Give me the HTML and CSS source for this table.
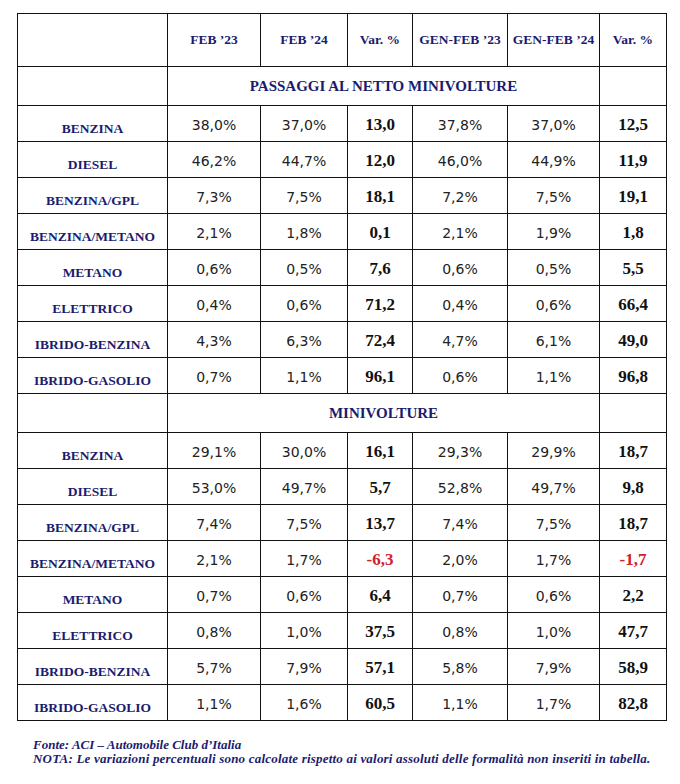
FILE: index.html
```html
<!DOCTYPE html>
<html lang="it">
<head>
<meta charset="utf-8">
<link rel="stylesheet" href="styles.css">
</head>
<body>
<table class="tbl">
  <colgroup>
    <col class="c-lab"><col class="c1"><col class="c2"><col class="c3"><col class="c4"><col class="c5"><col class="c6">
  </colgroup>
  <tr class="head">
    <th></th><th>FEB ’23</th><th>FEB ’24</th><th>Var. %</th><th>GEN-FEB ’23</th><th>GEN-FEB ’24</th><th>Var. %</th>
  </tr>
  <tr class="sec">
    <td></td><td colspan="5">PASSAGGI AL NETTO MINIVOLTURE</td><td></td>
  </tr>
  <tr><td class="lab">BENZINA</td><td>38,0%</td><td>37,0%</td><td class="var">13,0</td><td>37,8%</td><td>37,0%</td><td class="var">12,5</td></tr>
  <tr><td class="lab">DIESEL</td><td>46,2%</td><td>44,7%</td><td class="var">12,0</td><td>46,0%</td><td>44,9%</td><td class="var">11,9</td></tr>
  <tr><td class="lab">BENZINA/GPL</td><td>7,3%</td><td>7,5%</td><td class="var">18,1</td><td>7,2%</td><td>7,5%</td><td class="var">19,1</td></tr>
  <tr><td class="lab">BENZINA/METANO</td><td>2,1%</td><td>1,8%</td><td class="var">0,1</td><td>2,1%</td><td>1,9%</td><td class="var">1,8</td></tr>
  <tr><td class="lab">METANO</td><td>0,6%</td><td>0,5%</td><td class="var">7,6</td><td>0,6%</td><td>0,5%</td><td class="var">5,5</td></tr>
  <tr><td class="lab">ELETTRICO</td><td>0,4%</td><td>0,6%</td><td class="var">71,2</td><td>0,4%</td><td>0,6%</td><td class="var">66,4</td></tr>
  <tr><td class="lab">IBRIDO-BENZINA</td><td>4,3%</td><td>6,3%</td><td class="var">72,4</td><td>4,7%</td><td>6,1%</td><td class="var">49,0</td></tr>
  <tr><td class="lab">IBRIDO-GASOLIO</td><td>0,7%</td><td>1,1%</td><td class="var">96,1</td><td>0,6%</td><td>1,1%</td><td class="var">96,8</td></tr>
  <tr class="sec">
    <td></td><td colspan="5">MINIVOLTURE</td><td></td>
  </tr>
  <tr><td class="lab">BENZINA</td><td>29,1%</td><td>30,0%</td><td class="var">16,1</td><td>29,3%</td><td>29,9%</td><td class="var">18,7</td></tr>
  <tr><td class="lab">DIESEL</td><td>53,0%</td><td>49,7%</td><td class="var">5,7</td><td>52,8%</td><td>49,7%</td><td class="var">9,8</td></tr>
  <tr><td class="lab">BENZINA/GPL</td><td>7,4%</td><td>7,5%</td><td class="var">13,7</td><td>7,4%</td><td>7,5%</td><td class="var">18,7</td></tr>
  <tr><td class="lab">BENZINA/METANO</td><td>2,1%</td><td>1,7%</td><td class="var neg">-6,3</td><td>2,0%</td><td>1,7%</td><td class="var neg">-1,7</td></tr>
  <tr><td class="lab">METANO</td><td>0,7%</td><td>0,6%</td><td class="var">6,4</td><td>0,7%</td><td>0,6%</td><td class="var">2,2</td></tr>
  <tr><td class="lab">ELETTRICO</td><td>0,8%</td><td>1,0%</td><td class="var">37,5</td><td>0,8%</td><td>1,0%</td><td class="var">47,7</td></tr>
  <tr><td class="lab">IBRIDO-BENZINA</td><td>5,7%</td><td>7,9%</td><td class="var">57,1</td><td>5,8%</td><td>7,9%</td><td class="var">58,9</td></tr>
  <tr><td class="lab">IBRIDO-GASOLIO</td><td>1,1%</td><td>1,6%</td><td class="var">60,5</td><td>1,1%</td><td>1,7%</td><td class="var">82,8</td></tr>
</table>
<div class="notes">
  <p>Fonte: ACI – Automobile Club d’Italia</p>
  <p class="nota">NOTA: Le variazioni percentuali sono calcolate rispetto ai valori assoluti delle formalità non inseriti in tabella.</p>
</div>
</body>
</html>
```

FILE: styles.css
```css
html, body {
  margin: 0;
  padding: 0;
  background: #ffffff;
}

body {
  padding: 13px 0 0 17px;
}

.tbl {
  border-collapse: collapse;
  table-layout: fixed;
  width: 649px;
}

.c-lab { width: 150px; }
.c1 { width: 93px; }
.c2 { width: 87px; }
.c3 { width: 65px; }
.c4 { width: 95px; }
.c5 { width: 92px; }
.c6 { width: 67px; }

.tbl th,
.tbl td {
  border: 1px solid #111;
  padding: 0;
  text-align: center;
  vertical-align: middle;
  white-space: nowrap;
}

.tbl tr {
  height: 36px;
}

.tbl td {
  font-family: "DejaVu Sans", Verdana, sans-serif;
  font-size: 14px;
  color: #222;
  padding-top: 3px;
}

.tbl tr.head {
  height: 53px;
}

.tbl .head th {
  font-family: "Liberation Serif", "Times New Roman", serif;
  font-weight: bold;
  font-size: 13.5px;
  color: #1b1b6e;
}

.tbl tr.sec {
  height: 39px;
}

.tbl .sec td {
  font-family: "Liberation Serif", "Times New Roman", serif;
  font-weight: bold;
  font-size: 15px;
  color: #1b1b6e;
  padding-top: 0;
}

.tbl td.lab {
  font-family: "Liberation Serif", "Times New Roman", serif;
  font-weight: bold;
  font-size: 13.5px;
  color: #1b1b6e;
  padding-top: 10px;
}

.tbl td.var {
  font-family: "Liberation Serif", "Times New Roman", serif;
  font-weight: bold;
  font-size: 17px;
  color: #111;
  padding-top: 2px;
}

.tbl td.neg {
  color: #d0202a;
}

.notes {
  margin-top: 17px;
  padding-left: 16px;
  font-family: "Liberation Serif", "Times New Roman", serif;
  font-style: italic;
  font-weight: bold;
  font-size: 13px;
  line-height: 14px;
  color: #1b1b6e;
}

.notes p {
  margin: 0;
}

.notes .nota {
  letter-spacing: 0.2px;
}
```
